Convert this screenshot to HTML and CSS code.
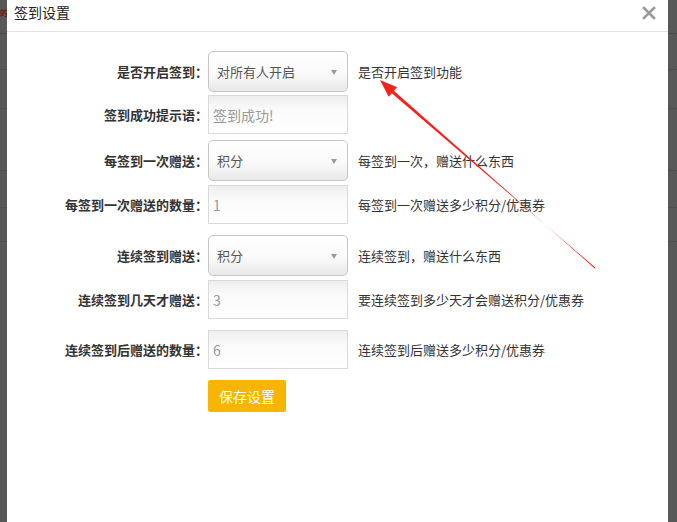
FILE: index.html
```html
<!DOCTYPE html>
<html lang="zh-CN">
<head>
    <meta charset="UTF-8">
    <title>签到设置</title>
    <link rel="stylesheet" href="styles.css">
</head>
<body>
    <div class="backdrop-text">的</div>
    <div class="modal">
        <div class="modal-header">
            <span class="modal-title">签到设置</span>
            <svg class="modal-close" width="14" height="14" viewBox="0 0 14 14">
                <path d="M2 2 L12 12 M12 2 L2 12" stroke="#999" stroke-width="2.6" stroke-linecap="square"/>
            </svg>
        </div>

        <form class="sign-form">
            <div class="form-row gap-3">
                <label>是否开启签到：</label>
                <div class="select-box"><select><option>对所有人开启</option></select></div>
                <span class="hint">是否开启签到功能</span>
            </div>
            <div class="form-row gap-6">
                <label>签到成功提示语：</label>
                <input type="text" class="text-input" placeholder="签到成功!">
            </div>
            <div class="form-row gap-4">
                <label>每签到一次赠送：</label>
                <div class="select-box"><select><option>积分</option></select></div>
                <span class="hint">每签到一次，赠送什么东西</span>
            </div>
            <div class="form-row gap-11">
                <label>每签到一次赠送的数量：</label>
                <input type="text" class="text-input" value="1">
                <span class="hint">每签到一次赠送多少积分/优惠券</span>
            </div>
            <div class="form-row gap-4">
                <label>连续签到赠送：</label>
                <div class="select-box"><select><option>积分</option></select></div>
                <span class="hint">连续签到，赠送什么东西</span>
            </div>
            <div class="form-row gap-11">
                <label>连续签到几天才赠送：</label>
                <input type="text" class="text-input" value="3">
                <span class="hint">要连续签到多少天才会赠送积分/优惠券</span>
            </div>
            <div class="form-row gap-11">
                <label>连续签到后赠送的数量：</label>
                <input type="text" class="text-input" value="6">
                <span class="hint">连续签到后赠送多少积分/优惠券</span>
            </div>
            <div class="form-row">
                <label></label>
                <button type="button" class="save-btn">保存设置</button>
            </div>
        </form>
    </div>

    <!-- annotation arrow drawn on top of the screenshot -->
    <svg class="annotation" width="677" height="522" viewBox="0 0 677 522">
        <polygon fill="#f5221b" points="380,80 388.7,96.8 391.8,93.2 595.3,267.6 594.7,268.4 393.8,90.8 397.2,87.2"/>
    </svg>
</body>
</html>
```

FILE: styles.css
```css
body {
    margin: 0;
    background-color: #585858;
    background-image:
        linear-gradient(#4a4a4a, #4a4a4a),
        linear-gradient(#4f4f4f, #4f4f4f),
        linear-gradient(#4f4f4f, #4f4f4f),
        linear-gradient(#4f4f4f, #4f4f4f),
        linear-gradient(#4f4f4f, #4f4f4f),
        linear-gradient(#4f4f4f, #4f4f4f);
    background-size: 100% 1px;
    background-repeat: no-repeat;
    background-position: 0 33px, 0 69px, 0 108px, 0 170px, 0 207px, 0 241px;
    font-family: "Noto Sans CJK SC", "Liberation Sans", sans-serif;
    color: #333;
    font-size: 13px;
    overflow: hidden;
}
.backdrop-text {
    position: absolute;
    left: 0;
    top: 9px;
    color: #7a1010;
    font-size: 8px;
    line-height: 8px;
    font-weight: bold;
}
.modal {
    position: relative;
    margin-left: 7px;
    width: 661px;
    height: 522px;
    background-color: #fff;
}
.modal-header {
    height: 31px;
    border-bottom: 1px solid #e3e3e3;
    display: flex;
    align-items: center;
    justify-content: space-between;
    padding: 0 12px 0 7px;
}
.modal-title {
    font-size: 14px;
    color: #222;
    margin-top: -7px;
}
.modal-close {
    margin-top: -6px;
}
.sign-form {
    padding-top: 19px;
}
.form-row {
    display: flex;
    align-items: center;
}
.gap-3 { margin-bottom: 3px; }
.gap-4 { margin-bottom: 4px; }
.gap-6 { margin-bottom: 6px; }
.gap-11 { margin-bottom: 11px; }
.form-row label {
    width: 201px;
    flex-shrink: 0;
    text-align: right;
    font-weight: bold;
    font-size: 13px;
    color: #333;
}
.select-box {
    position: relative;
    width: 140px;
    height: 41px;
    box-sizing: border-box;
    border: 1px solid #c6c6c6;
    border-radius: 5px;
    background: linear-gradient(#fff 0%, #fafafa 55%, #e9e9e9 100%);
}
.select-box select {
    appearance: none;
    -webkit-appearance: none;
    border: none;
    background: transparent;
    width: 100%;
    height: 100%;
    padding: 0 0 0 8px;
    font-family: inherit;
    font-size: 13px;
    color: #555;
    outline: none;
}
.select-box::after {
    content: "";
    position: absolute;
    right: 10px;
    top: 18px;
    border-left: 3.5px solid transparent;
    border-right: 3.5px solid transparent;
    border-top: 5px solid #9a9a9a;
}
.text-input {
    width: 140px;
    height: 39px;
    box-sizing: border-box;
    border: 1px solid #d9d9d9;
    padding: 0 4px;
    font-family: inherit;
    font-size: 14px;
    color: #999;
    background: linear-gradient(#eeeeee 0%, #fbfbfb 40%, #fff 100%);
    outline: none;
}
.text-input::placeholder {
    color: #999;
}
.hint {
    margin-left: 10px;
    font-size: 13px;
    color: #333;
}
.save-btn {
    width: 78px;
    height: 32px;
    border: none;
    border-radius: 2px;
    background-color: #f7b500;
    color: #fff;
    font-family: inherit;
    font-size: 14px;
    cursor: pointer;
}
.annotation {
    position: absolute;
    left: 0;
    top: 0;
    pointer-events: none;
}
```
